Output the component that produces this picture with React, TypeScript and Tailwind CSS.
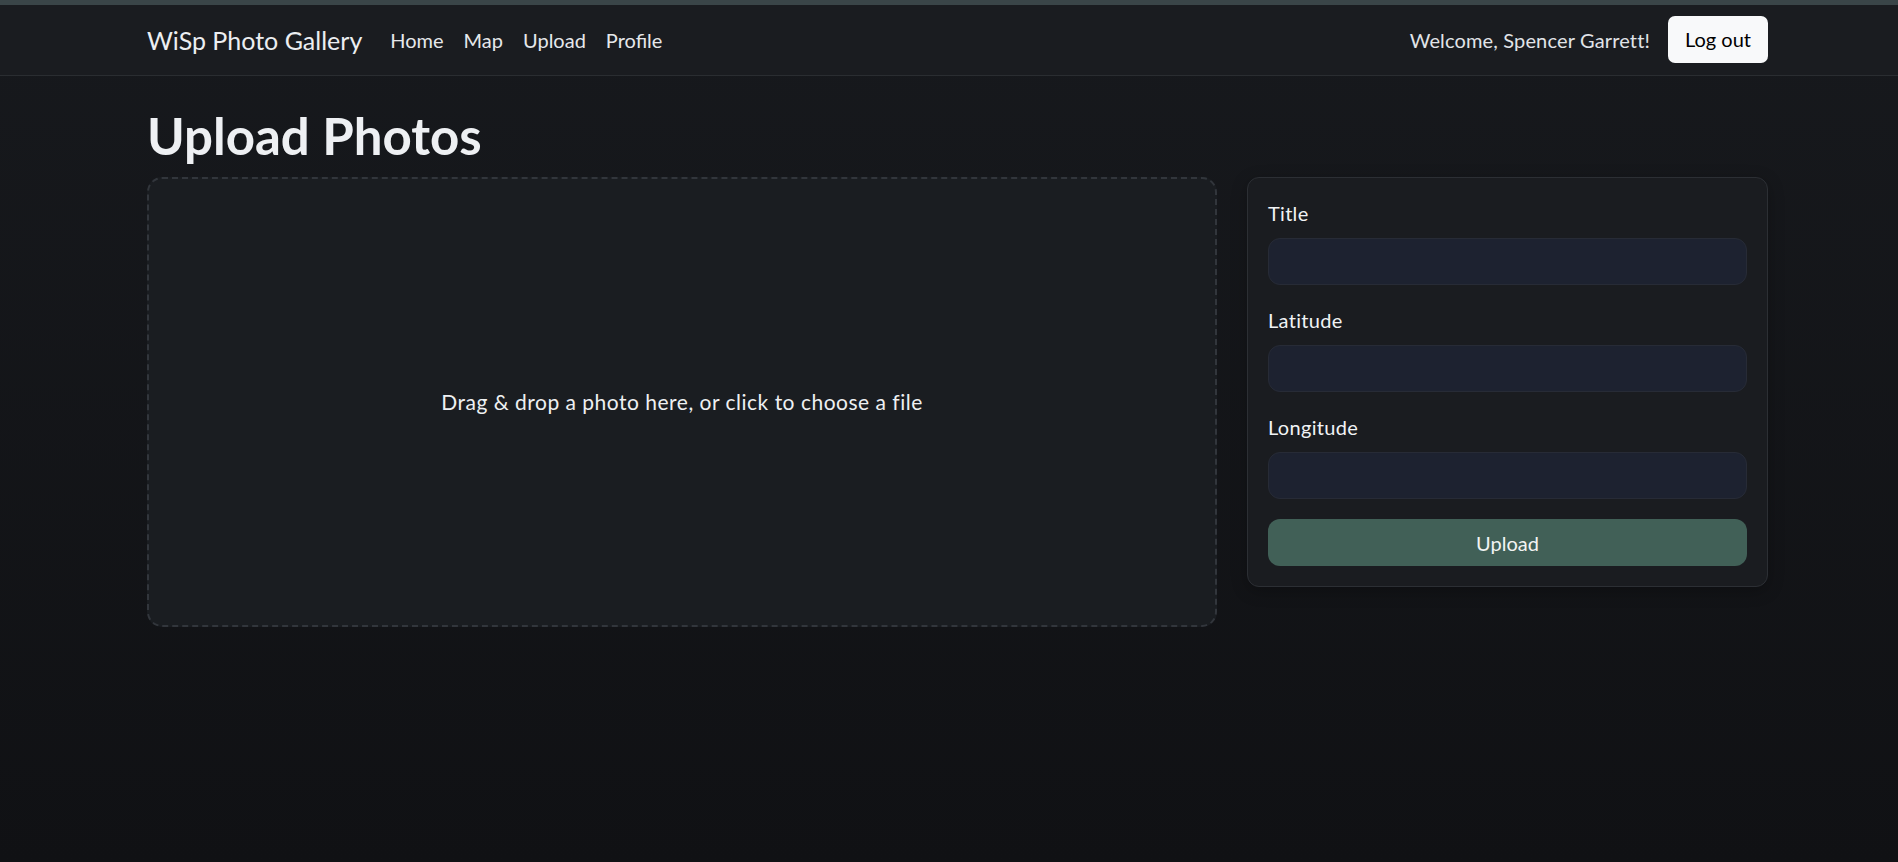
import React from "react";

export default function App() {
  const font = { fontFamily: "Lato, 'Noto Sans', sans-serif" };
  return (
    <div
      className="min-h-[862px] w-full bg-gradient-to-b from-[#17191d] to-[#101114] text-[#e9ecef]"
      style={font}
    >
      <div className="h-[5px] bg-[#3a4548]" />
      <nav className="h-[71px] bg-[#1a1c20] border-b border-[#2a2d31]">
        <div className="ml-[147px] w-[1621px] h-full flex items-center justify-between">
          <div className="flex items-center">
            <span className="text-[25px] text-[#eceef1] mr-[18px] leading-[30px]">WiSp Photo Gallery</span>
            <div className="flex items-center text-[20px] text-[#e6e8eb]">
              <a className="px-[10px]">Home</a>
              <a className="px-[10px]">Map</a>
              <a className="px-[10px]">Upload</a>
              <a className="px-[10px]">Profile</a>
            </div>
          </div>
          <div className="flex items-center">
            <span className="text-[20px] tracking-[0.15px] text-[#e1e4e8]">Welcome, Spencer Garrett!</span>
            <button className="ml-[18px] mb-[2px] h-[47px] px-[17px] rounded-[7px] bg-[#f8f9fa] text-black text-[20px]">
              Log out
            </button>
          </div>
        </div>
      </nav>
      <main className="ml-[147px] w-[1621px] pt-[30px]">
        <h1 className="text-[51px] font-bold leading-[60px] text-[#eef0f3] mb-[11px]">Upload Photos</h1>
        <div className="flex gap-[30px] items-start">
          <div className="w-[1070px] h-[450px] rounded-[15px] border-2 border-dashed border-[#32363c] bg-[#1a1d21] flex items-center justify-center">
            <span className="text-[21px] tracking-[0.5px] text-[#eef0f2]">Drag &amp; drop a photo here, or click to choose a file</span>
          </div>
          <div className="w-[521px] rounded-[12px] border border-[#2c2f34] bg-[#1a1c20] px-[20px] pt-[20px] pb-[20px] shadow-[0_4px_16px_rgba(0,0,0,0.25)]">
            {["Title", "Latitude", "Longitude"].map((l) => (
              <div key={l} className="mb-[20px]">
                <label className="block text-[20px] tracking-[0.3px] leading-[30px] mb-[10px] text-[#f1f3f5]">{l}</label>
                <input className="block w-full h-[47px] rounded-[12px] bg-[#1d2230] border border-[#272b36] outline-none" />
              </div>
            ))}
            <button className="w-full h-[47px] rounded-[12px] bg-[#416057] text-[20px] text-[#f2f4f3]">
              Upload
            </button>
          </div>
        </div>
      </main>
    </div>
  );
}
